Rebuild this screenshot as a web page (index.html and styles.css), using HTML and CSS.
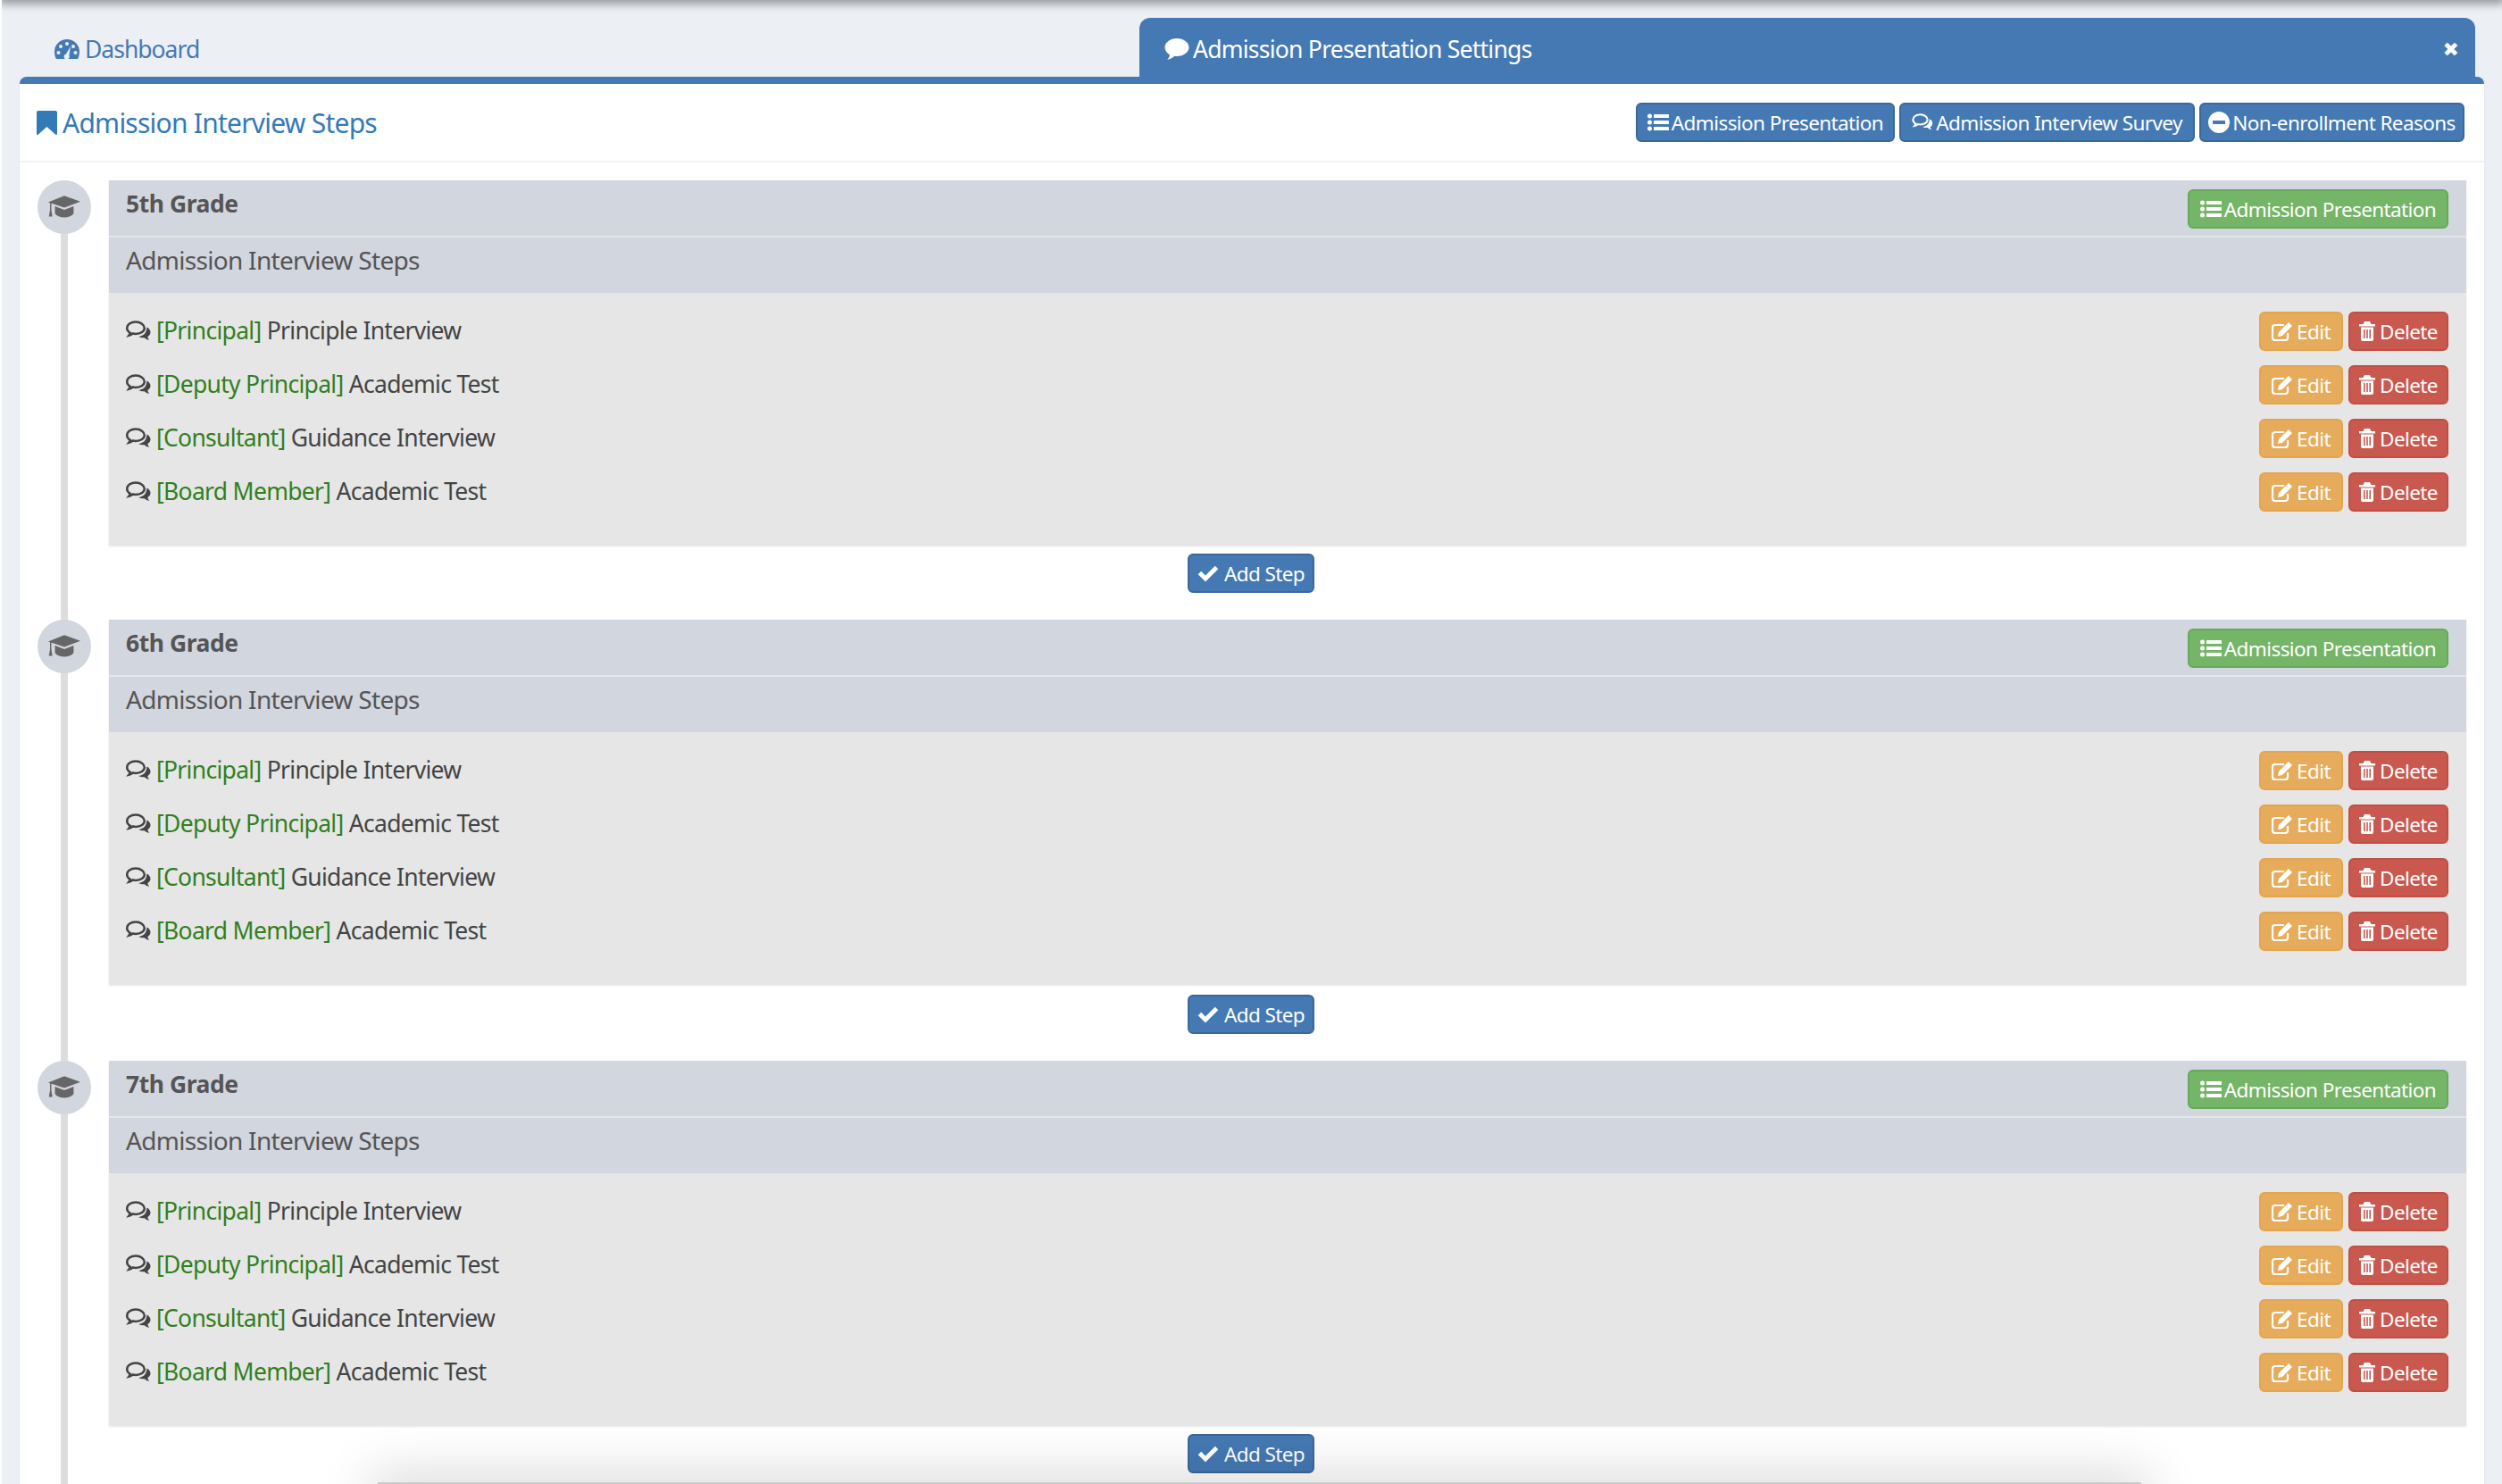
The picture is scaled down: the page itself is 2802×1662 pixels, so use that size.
FILE: index.html
```html
<!DOCTYPE HTML>
<html>
  <head>
    <meta charset="utf-8">
    <title>Admission Presentation Settings</title>
    <link rel="stylesheet" href="styles.css">
  </head>
  <body>
    <svg class="defs" width="0" height="0">
      <symbol id="i-list" viewBox="0 0 24 20"><circle cx="2.5" cy="3" r="2.5"/><circle cx="2.5" cy="10" r="2.5"/><circle cx="2.5" cy="17" r="2.5"/><rect x="7" y="1" width="17" height="4" rx=".6"/><rect x="7" y="8" width="17" height="4" rx=".6"/><rect x="7" y="15" width="17" height="4" rx=".6"/></symbol>
      <symbol id="i-comments" viewBox="0 0 28 24"><path d="M11 1.500C5.300 1.500 1.200 4.700 1.200 8.500c0 2.200 1.400 4.100 3.600 5.400-.3 1-.8 1.900-1.500 2.800 1.700-.4 3.300-1.200 4.500-2.200 1.100.3 2.300.4 3.200.4 5.700 0 9.800-2.900 9.800-6.400S16.700 1.500 11 1.500z" fill="none" stroke="currentColor" stroke-width="2.500"/><path d="M23.300 7.500c2.700 1.200 4.200 3.300 4.200 5.600 0 2.100-1.200 3.900-3.200 5.100.3 1.500 1 2.700 2 3.800-2.200-.4-4.100-1.400-5.500-2.700-2.400.2-4.900-.3-6.700-1.400 4.800-.3 9.400-3.600 9.200-10.400z"/></symbol>
      <symbol id="i-edit" viewBox="1 1 24 22"><path d="M19 14v5a3 3 0 0 1-3 3H5a3 3 0 0 1-3-3V8a3 3 0 0 1 3-3h10" fill="none" stroke="currentColor" stroke-width="2.200"/><path d="M9 13 20 2l4 4-11 11-5 1z"/></symbol>
      <symbol id="i-trash" viewBox="1 1 18 22"><path d="M7 1h6l1.500 3H19v2.500H1V4h4.500z"/><path d="M3 7.500h14V21a2 2 0 0 1-2 2H5a2 2 0 0 1-2-2zM6 10v10h1.600V10zm3.200 0v10h1.600V10zm3.200 0v10H14V10z" fill-rule="evenodd"/></symbol>
      <symbol id="i-check" viewBox="0 0 24 20"><path d="M9 19.500.7 11.200l3.500-3.500L9 12.500 19.800 1.700l3.500 3.500z"/></symbol>
      <symbol id="i-cap" viewBox="0 0 40 28"><path d="M20 0 39 7 20 14 6 9.200 4.700 9v7.500l1.300 8H1.800l1.400-8V8.500L1 7.600z"/><path d="M9 12.500 20 16.500 31 12.500v8.500c-2.500 3.200-7 4.500-11 4.500s-8.500-1.300-11-4.500z"/></symbol>
    </svg>

    <div class="topshadow"></div>

    <nav class="tabs">
      <a class="tab">
        <svg class="ico" viewBox="0 0 28 22" width="28" height="22"><path fill-rule="evenodd" d="M14 0a14 14 0 0 1 14 14c0 2.900-.7 5.600-1.900 8H1.900C.7 19.600 0 16.900 0 14A14 14 0 0 1 14 0zm0 3a2 2 0 1 0 0 4 2 2 0 0 0 0-4zM7 6a2 2 0 1 0 0 4 2 2 0 0 0 0-4zm14 0a2 2 0 1 0 0 4 2 2 0 0 0 0-4zM4.500 13a2 2 0 1 0 0 4 2 2 0 0 0 0-4zm19 0a2 2 0 1 0 0 4 2 2 0 0 0 0-4zM18 8l-5 8.500a3 3 0 1 0 3.400 1.700z"/></svg>
        Dashboard
      </a>
      <a class="tab active">
        <svg class="ico" viewBox="0 0 28 26" width="28" height="26"><path d="M14 1c7.500 0 13.500 4.500 13.500 10S21.500 21 14 21c-.9 0-1.800-.1-2.700-.2C9 23 6.300 24.400 3 25c1.500-1.500 2.600-3.200 3-5.600C2.800 17.600.5 14.500.5 11 .5 5.500 6.500 1 14 1z"/></svg>
        Admission Presentation Settings
        <span class="close">&#10006;</span>
      </a>
    </nav>

    <main class="card">
      <header class="card-head">
        <h1><svg class="ico" viewBox="0 0 23 27" width="23" height="27"><path d="M2 0h19a2 2 0 0 1 2 2v24a1 1 0 0 1-1.700.7L11.500 18 1.700 26.700A1 1 0 0 1 0 26V2a2 2 0 0 1 2-2z"/></svg>Admission Interview Steps</h1>
        <div class="head-btns">
          <a class="btn blue w-pres"><svg class="ico"><use href="#i-list"/></svg>Admission Presentation</a>
          <a class="btn blue w-survey"><svg class="ico"><use href="#i-comments"/></svg>Admission Interview Survey</a>
          <a class="btn blue w-reasons"><svg class="ico minus" viewBox="0 0 24 24"><path fill-rule="evenodd" d="M12 0a12 12 0 1 1 0 24 12 12 0 0 1 0-24zM5 10v4h14v-4z"/></svg>Non-enrollment Reasons</a>
        </div>
      </header>

      <div class="timeline">
        <section class="grade">
          <div class="dot"><svg><use href="#i-cap"/></svg></div>
          <div class="panel">
            <div class="panel-title"><b>5th Grade</b><a class="btn green"><svg class="ico"><use href="#i-list"/></svg>Admission Presentation</a></div>
            <div class="panel-sub">Admission Interview Steps</div>
            <ul class="steps">
              <li><span class="step"><svg class="chat"><use href="#i-comments"/></svg><em>[Principal]</em> Principle Interview</span><a class="btn orange"><svg class="ico"><use href="#i-edit"/></svg>Edit</a><a class="btn red"><svg class="ico"><use href="#i-trash"/></svg>Delete</a></li>
              <li><span class="step"><svg class="chat"><use href="#i-comments"/></svg><em>[Deputy Principal]</em> Academic Test</span><a class="btn orange"><svg class="ico"><use href="#i-edit"/></svg>Edit</a><a class="btn red"><svg class="ico"><use href="#i-trash"/></svg>Delete</a></li>
              <li><span class="step"><svg class="chat"><use href="#i-comments"/></svg><em>[Consultant]</em> Guidance Interview</span><a class="btn orange"><svg class="ico"><use href="#i-edit"/></svg>Edit</a><a class="btn red"><svg class="ico"><use href="#i-trash"/></svg>Delete</a></li>
              <li><span class="step"><svg class="chat"><use href="#i-comments"/></svg><em>[Board Member]</em> Academic Test</span><a class="btn orange"><svg class="ico"><use href="#i-edit"/></svg>Edit</a><a class="btn red"><svg class="ico"><use href="#i-trash"/></svg>Delete</a></li>
            </ul>
          </div>
          <div class="add"><a class="btn blue"><svg class="ico"><use href="#i-check"/></svg>Add Step</a></div>
        </section>

        <section class="grade">
          <div class="dot"><svg><use href="#i-cap"/></svg></div>
          <div class="panel">
            <div class="panel-title"><b>6th Grade</b><a class="btn green"><svg class="ico"><use href="#i-list"/></svg>Admission Presentation</a></div>
            <div class="panel-sub">Admission Interview Steps</div>
            <ul class="steps">
              <li><span class="step"><svg class="chat"><use href="#i-comments"/></svg><em>[Principal]</em> Principle Interview</span><a class="btn orange"><svg class="ico"><use href="#i-edit"/></svg>Edit</a><a class="btn red"><svg class="ico"><use href="#i-trash"/></svg>Delete</a></li>
              <li><span class="step"><svg class="chat"><use href="#i-comments"/></svg><em>[Deputy Principal]</em> Academic Test</span><a class="btn orange"><svg class="ico"><use href="#i-edit"/></svg>Edit</a><a class="btn red"><svg class="ico"><use href="#i-trash"/></svg>Delete</a></li>
              <li><span class="step"><svg class="chat"><use href="#i-comments"/></svg><em>[Consultant]</em> Guidance Interview</span><a class="btn orange"><svg class="ico"><use href="#i-edit"/></svg>Edit</a><a class="btn red"><svg class="ico"><use href="#i-trash"/></svg>Delete</a></li>
              <li><span class="step"><svg class="chat"><use href="#i-comments"/></svg><em>[Board Member]</em> Academic Test</span><a class="btn orange"><svg class="ico"><use href="#i-edit"/></svg>Edit</a><a class="btn red"><svg class="ico"><use href="#i-trash"/></svg>Delete</a></li>
            </ul>
          </div>
          <div class="add"><a class="btn blue"><svg class="ico"><use href="#i-check"/></svg>Add Step</a></div>
        </section>

        <section class="grade">
          <div class="dot"><svg><use href="#i-cap"/></svg></div>
          <div class="panel">
            <div class="panel-title"><b>7th Grade</b><a class="btn green"><svg class="ico"><use href="#i-list"/></svg>Admission Presentation</a></div>
            <div class="panel-sub">Admission Interview Steps</div>
            <ul class="steps">
              <li><span class="step"><svg class="chat"><use href="#i-comments"/></svg><em>[Principal]</em> Principle Interview</span><a class="btn orange"><svg class="ico"><use href="#i-edit"/></svg>Edit</a><a class="btn red"><svg class="ico"><use href="#i-trash"/></svg>Delete</a></li>
              <li><span class="step"><svg class="chat"><use href="#i-comments"/></svg><em>[Deputy Principal]</em> Academic Test</span><a class="btn orange"><svg class="ico"><use href="#i-edit"/></svg>Edit</a><a class="btn red"><svg class="ico"><use href="#i-trash"/></svg>Delete</a></li>
              <li><span class="step"><svg class="chat"><use href="#i-comments"/></svg><em>[Consultant]</em> Guidance Interview</span><a class="btn orange"><svg class="ico"><use href="#i-edit"/></svg>Edit</a><a class="btn red"><svg class="ico"><use href="#i-trash"/></svg>Delete</a></li>
              <li><span class="step"><svg class="chat"><use href="#i-comments"/></svg><em>[Board Member]</em> Academic Test</span><a class="btn orange"><svg class="ico"><use href="#i-edit"/></svg>Edit</a><a class="btn red"><svg class="ico"><use href="#i-trash"/></svg>Delete</a></li>
            </ul>
          </div>
          <div class="add"><a class="btn blue"><svg class="ico"><use href="#i-check"/></svg>Add Step</a></div>
        </section>
      </div>
    </main>

    <div class="bottom-sheet"></div>
  </body>
</html>
```

FILE: styles.css
```css
* {
  box-sizing: border-box;
}
html, body {
  height: 1662px;
  overflow: hidden;
}
body {
  margin: 0;
  padding: 20px 20px 0 20px;
  border-left: 2px solid #fff;
  background: #ecf0f5;
  font-family: "Noto Sans", sans-serif;
  font-size: 26.5px;
  letter-spacing: -.7px;
  color: #444;
  position: relative;
}
.defs { position: absolute; }
.ico { fill: currentColor; }
a { text-decoration: none; }

.topshadow {
  position: absolute;
  top: -10px;
  left: 0;
  right: 0;
  height: 10px;
  box-shadow: 0 2px 10px 3px rgba(0, 0, 0, .35);
}

/* tabs */
.tabs {
  display: flex;
  height: 66px;
  padding-right: 10px;
}
.tab {
  display: flex;
  align-items: center;
  gap: 6px;
  width: 1254px;
  padding: 4px 0 0 39px;
  color: #4579b3;
  letter-spacing: -1px;
}
.tab.active {
  flex: 1;
  width: auto;
  gap: 4px;
  padding: 3px 18px 0 28px;
  border-radius: 12px 12px 0 0;
  background: #4579b3;
  color: #fff;
  letter-spacing: -.75px;
}
.close {
  margin: 2px 0 0 auto;
  font-size: 22px;
  letter-spacing: 0;
  font-family: "DejaVu Sans", sans-serif;
}

/* card */
.card {
  height: 1600px;
  background: #fff;
  border-top: 8px solid #4579b3;
  border-radius: 8px 8px 0 0;
  box-shadow: 0 0 3px rgba(0, 0, 0, .08);
}
.card-head {
  display: flex;
  justify-content: space-between;
  align-items: center;
  height: 88px;
  padding: 0 22px 0 19px;
  border-bottom: 2px solid #f4f4f4;
}
h1 {
  display: flex;
  align-items: center;
  gap: 6px;
  margin: 0;
  font-size: 30px;
  font-weight: 400;
  letter-spacing: -.76px;
  color: #337ab7;
}
.head-btns {
  display: flex;
  gap: 5px;
}
.w-pres { width: 290px; }
.w-survey { width: 331px; }
.w-reasons { width: 297px; }

/* buttons */
.btn {
  display: inline-flex;
  align-items: center;
  justify-content: center;
  flex-shrink: 0;
  gap: 3px;
  height: 44px;
  padding: 0 8px;
  border: 2px solid;
  border-radius: 6px;
  font-size: 22.5px;
  letter-spacing: -.6px;
  white-space: nowrap;
  color: #fff;
}
.btn .ico { width: 24px; height: 20px; }
.btn .minus { height: 24px; }
.blue { background: #4579b3; border-color: #3b689b; }
.green { background: #74b567; border-color: #67a95a; }
.orange { background: #e6ac5c; border-color: #e4a54e; }
.red { background: #c9594f; border-color: #c24d43; }

/* timeline */
.timeline {
  position: relative;
  padding: 20px 20px 0 100px;
}
.timeline::before {
  content: "";
  position: absolute;
  top: 20px;
  bottom: 0;
  left: 46px;
  width: 8px;
  background: #ddd;
}
.grade {
  position: relative;
  height: 494px;
}
.grade:first-child { height: 492px; }
.dot {
  position: absolute;
  top: 0;
  left: -80px;
  display: flex;
  align-items: center;
  justify-content: center;
  width: 60px;
  height: 60px;
  border-radius: 50%;
  background: #d2d6de;
}
.dot svg {
  width: 38px;
  height: 27px;
  fill: #666;
}
.panel {
  background: #e6e6e6;
  box-shadow: 0 1px 2px rgba(0, 0, 0, .1);
}
.panel-title, .panel-sub {
  display: flex;
  align-items: center;
  justify-content: space-between;
  height: 62px;
  padding: 0 20px 0 19px;
  background: #d2d6de;
  color: #555;
}
.panel-title { margin-bottom: 2px; }
.panel-title b {
  font-weight: 700;
  letter-spacing: -.45px;
  margin-top: -11px;
}
.panel-sub {
  padding-bottom: 13px;
  font-size: 28px;
}
.panel-title .btn { width: 292px; margin-top: 2px; }

/* steps */
.steps {
  list-style: none;
  margin: 2px 0 0;
  padding: 19px 20px 38px 19px;
}
.steps li {
  display: flex;
  align-items: center;
  gap: 6px;
  height: 44px;
  margin-bottom: 16px;
}
.steps li:last-child { margin-bottom: 0; }
.step {
  display: flex;
  align-items: center;
  flex: 1;
  padding-bottom: 3px;
  color: #444;
  white-space: pre;
}
.step em {
  font-style: normal;
  color: #327f1e;
}
.chat {
  width: 28px;
  height: 24px;
  margin: 2px 6px 0 0;
  fill: #444;
  color: #444;
}
.steps .orange { width: 94px; gap: 4px; }
.steps .red { width: 112px; gap: 5px; }
.btn.orange .ico { width: 24px; height: 22px; }
.btn.red .ico { width: 18px; height: 22px; }

.add {
  display: flex;
  justify-content: center;
  padding: 9px 82px 0 0;
}
.grade:nth-child(2) .add { padding-top: 11px; }
.add .btn { width: 142px; gap: 6px; }

/* thing peeking up from under the window */
.bottom-sheet {
  position: absolute;
  left: 421px;
  width: 1975px;
  top: 1660px;
  height: 40px;
  background: #ccc;
  box-shadow: 0 0 60px 8px rgba(0, 0, 0, .16);
}
```
